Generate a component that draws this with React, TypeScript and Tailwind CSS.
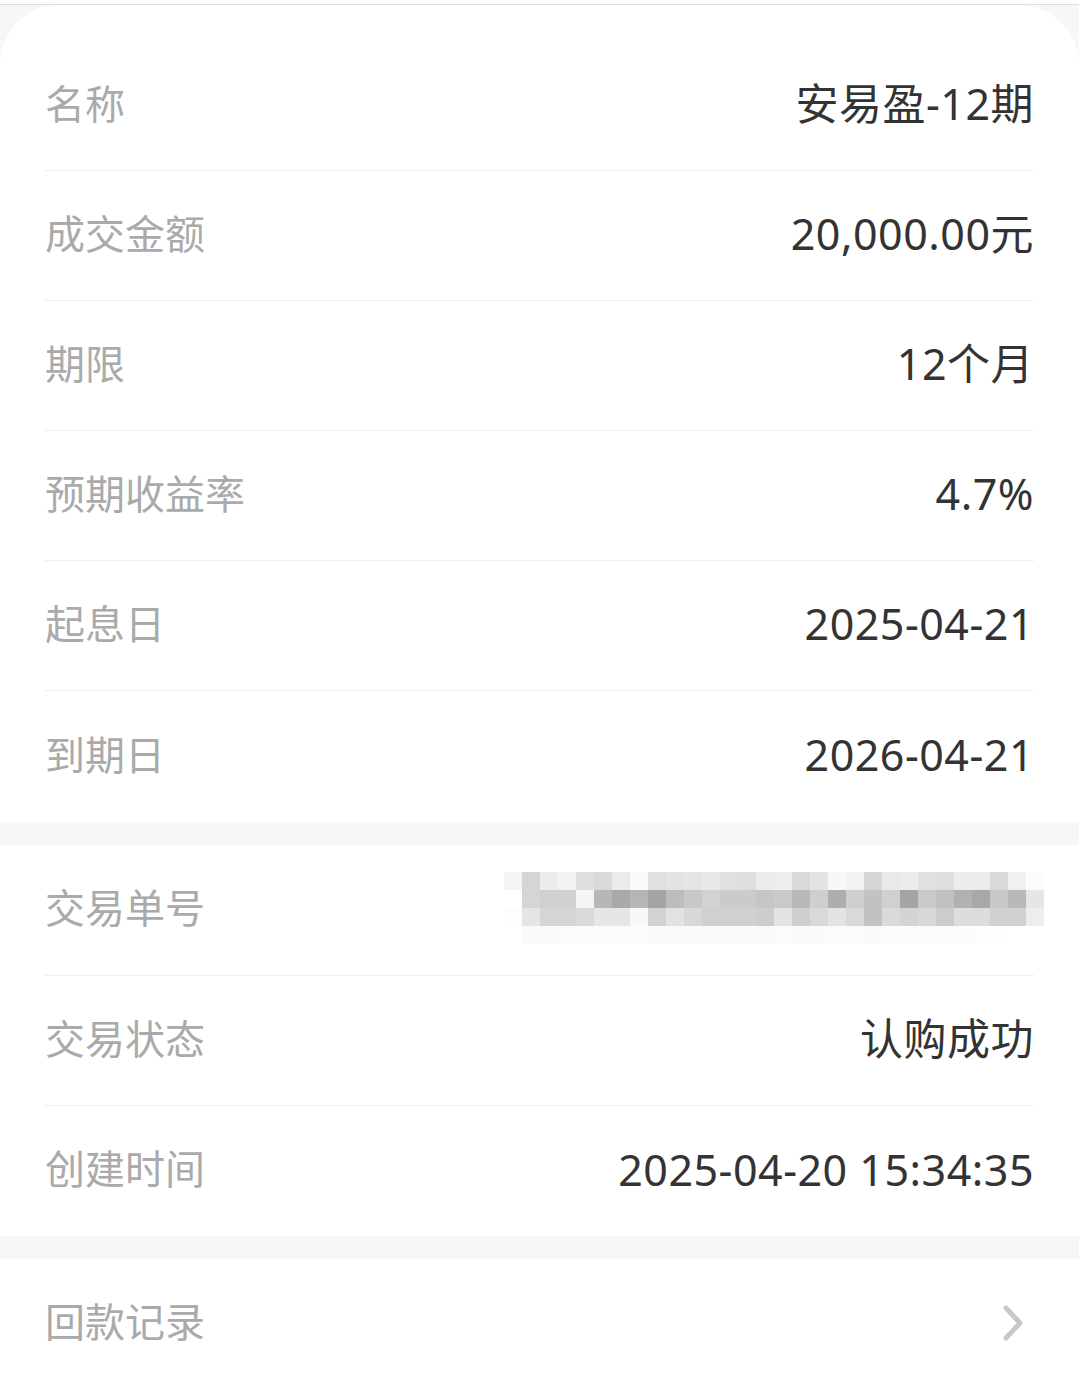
const font = { fontFamily: '"Noto Sans", "Noto Sans CJK SC", sans-serif' }

const mosaic: string[][] = [
  ['f5', 'd5', 'ec', 'f3', 'de', 'd9', 'eb', 'fa', 'e0', 'e3', 'e5', 'e8', 'e0', 'de', 'ec', 'ee', 'd9', 'e3', 'f8', 'f2', 'd5', 'e9', 'ec', 'e1', 'de', 'ec', 'eb', 'da', 'f0', 'fb', 'ff'],
  ['ff', 'd5', 'd0', 'd0', 'f5', 'b7', 'a9', 'b5', 'a5', 'bd', 'c8', 'd2', 'cb', 'cb', 'c6', 'c9', 'b9', 'cf', 'ae', 'cf', 'c2', 'd0', 'a5', 'c9', 'c0', 'b1', 'a8', 'c8', 'b8', 'e6', 'fa'],
  ['fd', 'e5', 'd5', 'd5', 'da', 'e6', 'e6', 'f8', 'd2', 'e2', 'd8', 'd0', 'd0', 'd0', 'cd', 'e3', 'cf', 'd9', 'e3', 'd9', 'c2', 'da', 'd4', 'd8', 'cc', 'dd', 'dc', 'd0', 'd1', 'ed', 'fd'],
  ['ff', 'fa', 'fa', 'fb', 'fb', 'fb', 'fb', 'fb', 'f9', 'f9', 'fa', 'fa', 'fa', 'fa', 'fa', 'fb', 'fa', 'fa', 'fb', 'fb', 'fa', 'fb', 'fb', 'fb', 'fb', 'fc', 'fd', 'fe', 'ff', 'ff', 'ff'],
]

function Row({ label, value, last, h = 'h-[130px]' }: { label: string; value: React.ReactNode; last?: boolean; h?: string }) {
  return (
    <div className={`flex items-center justify-between ${h} ${last ? '' : 'border-b border-[#eeeeee]'}`}>
      <span className="text-[40px] text-[#aaaaaa] leading-none -mt-[4px]" style={font}>{label}</span>
      <span className="text-[43px] text-[#333333] leading-none tracking-[0.5px] -mt-[4px]" style={font}>{value}</span>
    </div>
  )
}

function Blurred() {
  return (
    <svg width="540" height="72" viewBox="0 0 540 72" className="-mr-[10px]">
      {mosaic.map((row, r) =>
        row.map((c, i) => (
          <rect key={`${r}-${i}`} x={i * 18} y={r * 18} width="18" height="18" fill={`#${c}${c}${c}`} />
        ))
      )}
    </svg>
  )
}

export default function App() {
  return (
    <div className="w-[1079px] h-[1381px] overflow-hidden bg-white">
      <div className="h-[4px] bg-white" />
      <div className="border-t border-[#dedede] bg-[#f7f7f7]">
        <div className="bg-white rounded-t-[60px] pt-[36px] px-[45px]">
          <Row label="名称" value="安易盈-12期" />
          <Row label="成交金额" value="20,000.00元" />
          <Row label="期限" value="12个月" />
          <Row label="预期收益率" value="4.7%" />
          <Row label="起息日" value="2025-04-21" />
          <Row label="到期日" value="2026-04-21" last h="h-[131px]" />
        </div>

        <div className="mt-[23px] bg-white px-[45px]">
          <Row label="交易单号" value={<Blurred />} h="h-[131px]" />
          <Row label="交易状态" value="认购成功" />
          <Row label="创建时间" value="2025-04-20 15:34:35" last />
        </div>

        <div className="mt-[23px] bg-white px-[45px] h-[200px]">
          <div className="flex items-center justify-between h-[130px]">
            <span className="text-[40px] text-[#aaaaaa] leading-none -mt-[4px]" style={font}>回款记录</span>
            <svg width="28" height="40" viewBox="0 0 28 40" className="mr-[6px] -mt-[4px]">
              <path d="M6 6 L20 21 L6 36" fill="none" stroke="#c8c8c8" strokeWidth="5" strokeLinecap="round" strokeLinejoin="round" />
            </svg>
          </div>
        </div>
      </div>
    </div>
  )
}
